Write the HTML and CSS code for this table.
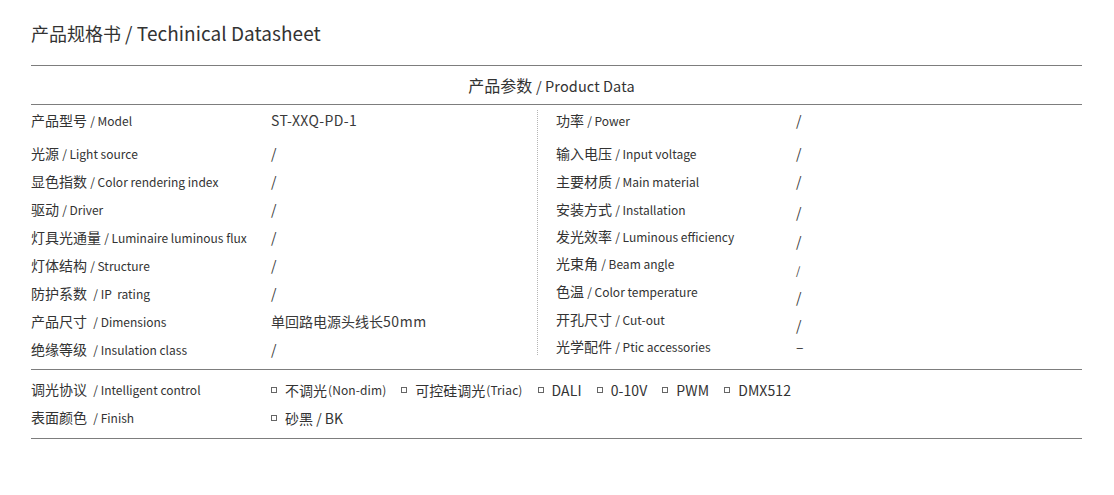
FILE: index.html
```html
<!DOCTYPE html>
<html lang="zh">
<head>
<meta charset="utf-8">
<title>产品规格书 / Techinical Datasheet</title>
<link rel="stylesheet" href="styles.css">
</head>
<body>
<div class="page">
  <h1 class="title">产品规格书 <span class="title-en">/ Techinical Datasheet</span></h1>

  <section class="sheet">
    <div class="sheet-head">产品参数 <span class="en-head">/ Product Data</span></div>

    <div class="specs">
      <div class="spec-col spec-left">
        <div class="spec-row"><span class="label">产品型号 <span class="en">/ Model</span></span><span class="value model">ST-XXQ-PD-1</span></div>
        <div class="spec-row"><span class="label">光源 <span class="en">/ Light source</span></span><span class="value">/</span></div>
        <div class="spec-row"><span class="label">显色指数 <span class="en">/ Color rendering index</span></span><span class="value">/</span></div>
        <div class="spec-row"><span class="label">驱动 <span class="en">/ Driver</span></span><span class="value">/</span></div>
        <div class="spec-row"><span class="label">灯具光通量 <span class="en">/ Luminaire luminous flux</span></span><span class="value">/</span></div>
        <div class="spec-row"><span class="label">灯体结构 <span class="en">/ Structure</span></span><span class="value">/</span></div>
        <div class="spec-row"><span class="label">防护系数 &nbsp;<span class="en">/ IP&nbsp; rating</span></span><span class="value">/</span></div>
        <div class="spec-row"><span class="label">产品尺寸 &nbsp;<span class="en">/ Dimensions</span></span><span class="value">单回路电源头线长<span class="num">50mm</span></span></div>
        <div class="spec-row"><span class="label">绝缘等级 &nbsp;<span class="en">/ Insulation class</span></span><span class="value">/</span></div>
      </div>

      <div class="spec-divider"></div>

      <div class="spec-col spec-right">
        <div class="spec-row"><span class="label">功率 <span class="en">/ Power</span></span><span class="value">/</span></div>
        <div class="spec-row"><span class="label">输入电压 <span class="en">/ Input voltage</span></span><span class="value">/</span></div>
        <div class="spec-row"><span class="label">主要材质 <span class="en">/ Main material</span></span><span class="value">/</span></div>
        <div class="spec-row"><span class="label">安装方式 <span class="en">/ Installation</span></span><span class="value nudge-3">/</span></div>
        <div class="spec-row"><span class="label">发光效率 <span class="en">/ Luminous efficiency</span></span><span class="value nudge-5">/</span></div>
        <div class="spec-row"><span class="label">光束角 <span class="en">/ Beam angle</span></span><span class="value nudge-7 small">/</span></div>
        <div class="spec-row"><span class="label">色温 <span class="en">/ Color temperature</span></span><span class="value nudge-6">/</span></div>
        <div class="spec-row"><span class="label">开孔尺寸 <span class="en">/ Cut-out</span></span><span class="value nudge-6">/</span></div>
        <div class="spec-row"><span class="label">光学配件 <span class="en">/ Ptic accessories</span></span><span class="value">–</span></div>
      </div>
    </div>

    <div class="options">
      <div class="opt-row">
        <span class="label">调光协议 &nbsp;<span class="en">/ Intelligent control</span></span>
        <span class="opt-list">
          <span class="opt"><span class="box"></span>不调光<span class="en-opt">(Non-dim)</span></span>
          <span class="opt"><span class="box"></span>可控硅调光<span class="en-opt">(Triac)</span></span>
          <span class="opt"><span class="box"></span><span class="latin">DALI</span></span>
          <span class="opt"><span class="box"></span><span class="latin">0-10V</span></span>
          <span class="opt"><span class="box"></span><span class="latin">PWM</span></span>
          <span class="opt"><span class="box"></span><span class="latin">DMX512</span></span>
        </span>
      </div>
      <div class="opt-row">
        <span class="label">表面颜色 &nbsp;<span class="en">/ Finish</span></span>
        <span class="opt-list">
          <span class="opt"><span class="box"></span>砂黑 / BK</span>
        </span>
      </div>
    </div>
  </section>
</div>
</body>
</html>
```

FILE: styles.css
```css
html, body {
  margin: 0;
  padding: 0;
  background: #ffffff;
}

body {
  font-family: "Noto Sans CJK SC", "Noto Sans", sans-serif;
  color: #333333;
}

.page {
  padding: 21px 32px 0 31px;
}

.title {
  margin: 0 0 20px;
  font-size: 18px;
  line-height: 24px;
  font-weight: 400;
  color: #333;
  white-space: nowrap;
}

.title-en {
  font-size: 19px;
  letter-spacing: 0.05px;
}

.sheet {
  border-top: 1px solid #7d7d7d;
}

.sheet-head {
  height: 38px;
  line-height: 38px;
  text-align: center;
  font-size: 16px;
  color: #333;
  padding-right: 10px;
  border-bottom: 1px solid #7d7d7d;
}

.en-head {
  font-size: 14.5px;
  letter-spacing: 0.1px;
}

.specs {
  display: flex;
  padding: 1px 0 6px;
  border-bottom: 1px solid #7d7d7d;
}

.spec-col {
  display: grid;
  grid-template-columns: 240px 1fr;
}

.spec-left {
  width: 506px;
  grid-template-rows: 33px repeat(8, 28px);
}

.spec-right {
  flex: 1;
  padding-left: 18px;
  grid-template-rows: 33px 28px 28px 27px 27px 28px 28px 27px 28px;
}

.spec-divider {
  width: 0;
  border-left: 1px dotted #b5b5b5;
  margin: 4px 0 8px;
}

.spec-row {
  display: contents;
}

.label,
.value {
  font-size: 14px;
  line-height: 28px;
  white-space: nowrap;
  align-self: start;
}

.label {
  color: #333;
}

.value {
  color: #3a3a3a;
}

.value.model {
  letter-spacing: 0.4px;
}

.en {
  font-size: 12px;
}

.num {
  letter-spacing: 0.6px;
}

.nudge-3 { padding-top: 3px; }
.nudge-5 { padding-top: 5px; }
.nudge-6 { padding-top: 6px; }
.nudge-7 { padding-top: 7px; }

.value.small {
  font-size: 11px;
}

.options {
  padding: 5px 0 7px;
  border-bottom: 1px solid #7d7d7d;
}

.opt-row {
  display: grid;
  grid-template-columns: 240px 1fr;
  height: 28px;
  align-items: center;
}

.opt-row .label {
  line-height: 28px;
}

.opt-list {
  display: flex;
  align-items: center;
  gap: 15px;
  font-size: 14px;
  line-height: 28px;
  white-space: nowrap;
}

.opt {
  display: inline-flex;
  align-items: center;
}

.box {
  display: inline-block;
  width: 6px;
  height: 6px;
  border: 1px solid #666;
  box-sizing: border-box;
  margin-right: 8px;
}

.en-opt {
  font-size: 12px;
  letter-spacing: 0.1px;
  margin-left: 1px;
}

.latin {
  letter-spacing: 0.1px;
}
```
